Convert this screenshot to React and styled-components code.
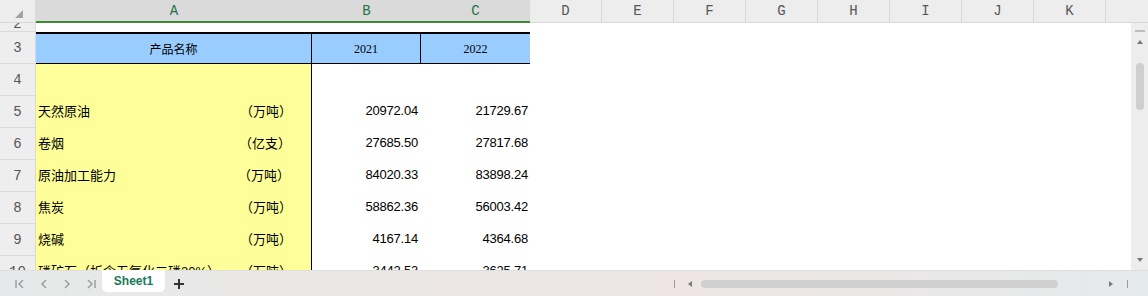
import React from 'react'
import styled, { createGlobalStyle } from 'styled-components'

const GlobalStyle = createGlobalStyle`
  html, body {
    margin: 0;
    padding: 0;
    background: #ffffff;
  }
  body {
    width: 1148px;
    height: 296px;
    overflow: hidden;
    font-family: "Liberation Sans", Arial, sans-serif;
  }
`

const COLS = '36px 276px 109px 109px'

const Sheet = styled.div`
  display: flex;
  flex-direction: column;
  width: 1148px;
  height: 296px;
  overflow: hidden;
`

const ColHeaderRow = styled.div`
  display: grid;
  grid-template-columns: ${COLS} repeat(8, 72px) 1fr;
  height: 23px;
  flex: none;
`

const Corner = styled.div`
  box-sizing: border-box;
  background: #ededed;
  border-right: 1px solid #d9d9d9;
  border-bottom: 1px solid #d9d9d9;
  display: flex;
  align-items: flex-start;
  padding: 10px 0 0 15px;
`

const ColHead = styled.div`
  box-sizing: border-box;
  display: flex;
  align-items: center;
  justify-content: center;
  font-family: "Liberation Mono", "DejaVu Sans Mono", monospace;
  font-size: 14px;
  background: ${({ $selected }) => ($selected ? '#dadada' : '#ededed')};
  color: ${({ $selected }) => ($selected ? '#217346' : '#555555')};
  border-bottom: ${({ $selected }) => ($selected ? '2px solid #3b8a2c' : '1px solid #d9d9d9')};
  border-right: ${({ $selected, $last }) => ($selected || $last ? 'none' : '1px solid #d9d9d9')};
`

const Body = styled.div`
  display: flex;
  flex: 1;
  min-height: 0;
`

const Grid = styled.div`
  flex: 1;
  display: grid;
  grid-template-columns: ${COLS} 1fr;
  grid-template-rows: 9px repeat(8, 32px);
  align-content: start;
  overflow: hidden;
`

const RowHead = styled.div`
  box-sizing: border-box;
  background: #eeeeee;
  border-right: 1px solid #d9d9d9;
  border-bottom: 1px solid #d9d9d9;
  display: flex;
  align-items: ${({ $clipped }) => ($clipped ? 'flex-end' : 'center')};
  justify-content: center;
  font-family: "Liberation Mono", "DejaVu Sans Mono", monospace;
  font-size: 14px;
  line-height: ${({ $clipped }) => ($clipped ? '13px' : '16px')};
  color: #555555;
  overflow: hidden;
`

const Blank = styled.div`
  background: #ffffff;
`

const HeadCell = styled.div`
  box-sizing: border-box;
  display: flex;
  align-items: center;
  justify-content: center;
  background: #99ccff;
  border-top: 2px solid #000000;
  border-bottom: 1px solid #000000;
  border-right: ${({ $edge }) => ($edge ? '1px solid #000000' : 'none')};
  font-family: "Liberation Serif", "Noto Sans CJK SC", serif;
  font-size: 12px;
  color: #000000;
  padding-top: 1px;
`

const LabelCell = styled.div`
  box-sizing: border-box;
  display: flex;
  align-items: center;
  justify-content: space-between;
  background: #ffff99;
  border-right: 1px solid #000000;
  padding: 0 ${({ $pad }) => $pad}px 4px 2px;
  font-family: "Liberation Sans", "Noto Sans CJK SC", sans-serif;
  font-size: 13px;
  color: #000000;
  white-space: nowrap;
  overflow: hidden;
`

const Unit = styled.span`
  letter-spacing: 0;
`

const NumCell = styled.div`
  box-sizing: border-box;
  display: flex;
  align-items: center;
  justify-content: flex-end;
  padding: 0 ${({ $pad }) => $pad}px 3px 0;
  font-family: "Liberation Sans", Arial, sans-serif;
  font-size: 13px;
  letter-spacing: -0.2px;
  color: #000000;
  white-space: nowrap;
  overflow: hidden;
`

const VScroll = styled.div`
  width: 17px;
  flex: none;
  background: #ededed;
  display: flex;
  flex-direction: column;
  align-items: center;
  padding: 7px 0 8px;
  box-sizing: border-box;
`

const Dash = styled.div`
  width: 10px;
  height: 2px;
  background: #bdbdbd;
`

const Tri = styled.div`
  width: 0;
  height: 0;
  border-style: solid;
  border-color: transparent;
  margin: ${({ $m }) => $m || '0'};
  ${({ $dir }) => $dir === 'up' && 'border-width: 0 3px 4px 3px; border-bottom-color: #7a7a7a;'}
  ${({ $dir }) => $dir === 'down' && 'border-width: 4px 3px 0 3px; border-top-color: #7a7a7a;'}
  ${({ $dir }) => $dir === 'left' && 'border-width: 3px 4px 3px 0; border-right-color: #7a7a7a;'}
  ${({ $dir }) => $dir === 'right' && 'border-width: 3px 0 3px 4px; border-left-color: #7a7a7a;'}
`

const VThumb = styled.div`
  width: 8px;
  height: 47px;
  border-radius: 4px;
  background: #cfcfcf;
  margin-top: 19px;
`

const Spacer = styled.div`
  flex: 1;
`

const BottomBar = styled.div`
  height: 26px;
  flex: none;
  box-sizing: border-box;
  display: flex;
  align-items: stretch;
  border-top: 1px solid #dedede;
  background: linear-gradient(90deg, #e6e9e9 0%, #ebe7e6 35%, #eee5e4 60%, #e5eaeb 100%);
`

const Nav = styled.div`
  display: flex;
  align-items: center;
  width: 102px;
  padding-left: 13px;
  box-sizing: border-box;
  gap: 7px;
`

const NavIcon = styled.svg`
  width: 16px;
  height: 16px;
  flex: none;
`

const Tab = styled.div`
  width: 63px;
  height: 22px;
  margin-top: -1px;
  background: #ffffff;
  border-radius: 0 0 5px 5px;
  display: flex;
  align-items: center;
  justify-content: center;
  font-family: "Liberation Sans", Arial, sans-serif;
  font-size: 12px;
  font-weight: bold;
  color: #17795b;
`

const AddButton = styled.svg`
  width: 12px;
  height: 12px;
  margin: 7px 0 0 8px;
`

const HScroll = styled.div`
  width: 474px;
  display: flex;
  align-items: center;
  padding-top: 1px;
`

const Bar = styled.div`
  width: 1px;
  height: 8px;
  background: #9a9a9a;
  margin: ${({ $m }) => $m};
`

const HThumb = styled.div`
  width: 357px;
  height: 8px;
  border-radius: 4px;
  background: #d0d0d0;
  margin-left: 9px;
`

const letters = ['D', 'E', 'F', 'G', 'H', 'I', 'J', 'K']

const rows = [
  { n: 5, name: '天然原油', unit: '（万吨）', b: '20972.04', c: '21729.67', pad: 19 },
  { n: 6, name: '卷烟', unit: '（亿支）', b: '27685.50', c: '27817.68', pad: 20 },
  { n: 7, name: '原油加工能力', unit: '（万吨）', b: '84020.33', c: '83898.24', pad: 21 },
  { n: 8, name: '焦炭', unit: '（万吨）', b: '58862.36', c: '56003.42', pad: 19 },
  { n: 9, name: '烧碱', unit: '（万吨）', b: '4167.14', c: '4364.68', pad: 19 },
  { n: 10, name: '磷矿石（折含五氧化二磷30%）', unit: '（万吨）', b: '3442.53', c: '3625.71', pad: 19 },
]

const Chevron = ({ dir, edge }) => (
  <NavIcon viewBox="0 0 16 16">
    {edge && <line x1={dir === 'left' ? 3 : 13} y1="4" x2={dir === 'left' ? 3 : 13} y2="12" stroke="#9a9a9a" strokeWidth="1.4" />}
    <polyline
      points={dir === 'left' ? '10,4 6,8 10,12' : '6,4 10,8 6,12'}
      fill="none"
      stroke="#9a9a9a"
      strokeWidth="1.4"
    />
  </NavIcon>
)

const App = () => (
  <Sheet>
    <GlobalStyle />
    <ColHeaderRow>
      <Corner>
        <svg width="8" height="8" viewBox="0 0 8 8">
          <polygon points="8,0 8,8 0,8" fill="#a3a3a3" />
        </svg>
      </Corner>
      <ColHead $selected>A</ColHead>
      <ColHead $selected>B</ColHead>
      <ColHead $selected>C</ColHead>
      {letters.map((l) => (
        <ColHead key={l}>{l}</ColHead>
      ))}
      <ColHead $last />
    </ColHeaderRow>

    <Body>
      <Grid>
        <RowHead $clipped>2</RowHead>
        <Blank />
        <Blank />
        <Blank />
        <Blank />

        <RowHead>3</RowHead>
        <HeadCell $edge>产品名称</HeadCell>
        <HeadCell $edge>2021</HeadCell>
        <HeadCell>2022</HeadCell>
        <Blank />

        <RowHead>4</RowHead>
        <LabelCell $pad={17} />
        <Blank />
        <Blank />
        <Blank />

        {rows.map((r) => (
          <React.Fragment key={r.n}>
            <RowHead>{r.n}</RowHead>
            <LabelCell $pad={r.pad}>
              <span>{r.name}</span>
              <Unit>{r.unit}</Unit>
            </LabelCell>
            <NumCell $pad={3}>{r.b}</NumCell>
            <NumCell $pad={2}>{r.c}</NumCell>
            <Blank />
          </React.Fragment>
        ))}
      </Grid>

      <VScroll>
        <Dash />
        <Tri $dir="up" $m="8px 0 0" />
        <VThumb />
        <Spacer />
        <Tri $dir="down" />
      </VScroll>
    </Body>

    <BottomBar>
      <Nav>
        <Chevron dir="left" edge />
        <Chevron dir="left" />
        <Chevron dir="right" />
        <Chevron dir="right" edge />
      </Nav>
      <Tab>Sheet1</Tab>
      <AddButton viewBox="0 0 12 12">
        <line x1="6" y1="1" x2="6" y2="11" stroke="#333333" strokeWidth="2" />
        <line x1="1" y1="6" x2="11" y2="6" stroke="#333333" strokeWidth="2" />
      </AddButton>
      <Spacer />
      <HScroll>
        <Bar $m="0 0 0 0" />
        <Tri $dir="left" $m="0 0 0 13px" />
        <HThumb />
        <Tri $dir="right" $m="0 0 0 51px" />
        <Bar $m="0 0 0 14px" />
      </HScroll>
    </BottomBar>
  </Sheet>
)

export default App
